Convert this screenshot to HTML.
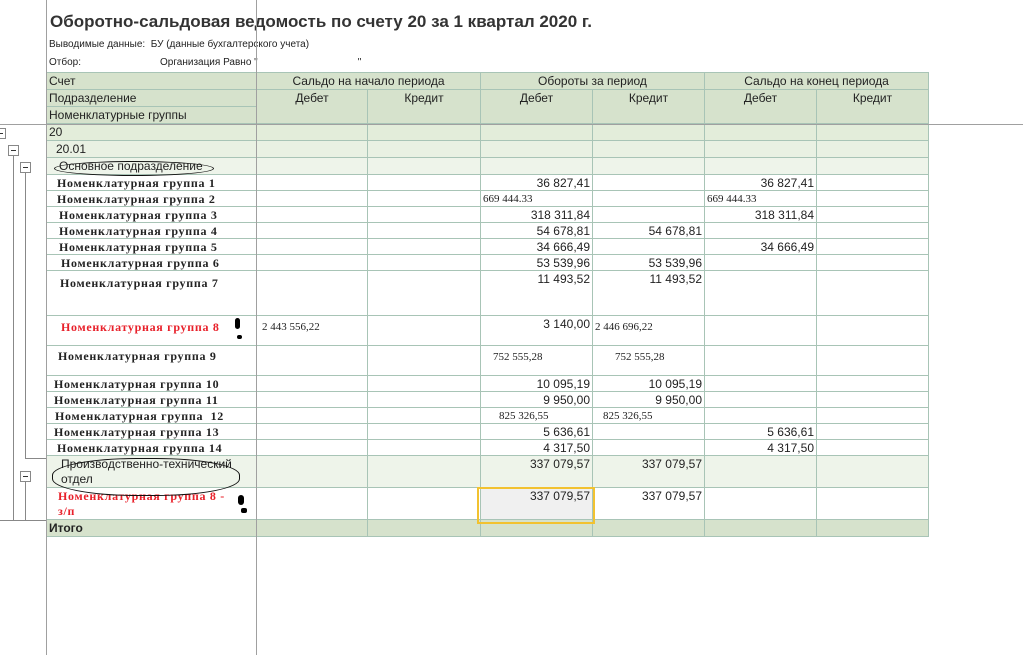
<!DOCTYPE html><html><head><meta charset="utf-8"><style>
body{margin:0;width:1023px;height:655px;background:#fff;position:relative;overflow:hidden;font-family:"Liberation Sans",sans-serif;font-size:12px;color:#222}
.a{position:absolute}
.vl{position:absolute;width:1px;background:#a0a0a0}
table{position:absolute;left:46px;top:72px;border-collapse:collapse;table-layout:fixed}
tr{height:16px}
tr.t{height:17px}
td{border:1px solid #a8c4b6;padding:1px 2px 0;height:auto;vertical-align:top;white-space:nowrap;overflow:hidden;line-height:14px}
.h{background:#d6e2cc;text-align:center;color:#222}
.n{text-align:right}
.s{font-family:"Liberation Serif",serif;font-size:11px}
.g{font-family:"Liberation Serif",serif;font-weight:bold;font-size:12px;letter-spacing:.7px;padding-left:10px}
.r{color:#e8202a}
.mb{position:absolute;width:9px;height:9px;border:1px solid #888;background:#fff}
.mb:after{content:"";position:absolute;left:2px;top:4px;width:5px;height:1px;background:#333}
</style></head><body>
<div class="a" style="left:50px;top:12px;font-size:17px;font-weight:bold;color:#333">Оборотно-сальдовая ведомость по счету 20 за 1 квартал 2020 г.</div>
<div class="a" style="left:49px;top:39px;font-size:10px">Выводимые данные:&nbsp; БУ (данные бухгалтерского учета)</div>
<div class="a" style="left:49px;top:57px;font-size:10px">Отбор:</div>
<div class="a" style="left:160px;top:57px;font-size:10px">Организация Равно "<span style="padding-left:100px">"</span></div>
<table>
<colgroup><col style="width:210px"><col style="width:111px"><col style="width:113px"><col style="width:112px"><col style="width:112px"><col style="width:112px"><col style="width:112px"></colgroup>
<tr class="t"><td class="h" style="text-align:left">Счет</td><td class="h" colspan="2">Сальдо на начало периода</td><td class="h" colspan="2">Обороты за период</td><td class="h" colspan="2">Сальдо на конец периода</td></tr>
<tr class="t"><td class="h" style="text-align:left">Подразделение</td><td class="h" rowspan="2">Дебет</td><td class="h" rowspan="2">Кредит</td><td class="h" rowspan="2">Дебет</td><td class="h" rowspan="2">Кредит</td><td class="h" rowspan="2">Дебет</td><td class="h" rowspan="2">Кредит</td></tr>
<tr class="t"><td class="h" style="text-align:left">Номенклатурные группы</td></tr>
<tr class="t" style="background:#e3edda"><td>20</td><td></td><td></td><td></td><td></td><td></td><td></td></tr>
<tr class="t" style="background:#e9f1e3"><td style="padding-left:9px">20.01</td><td></td><td></td><td></td><td></td><td></td><td></td></tr>
<tr class="t" style="background:#eef4ea"><td style="padding-left:12px">Основное подразделение</td><td></td><td></td><td></td><td></td><td></td><td></td></tr>
<tr><td class="g">Номенклатурная группа 1</td><td></td><td></td><td class="n">36 827,41</td><td></td><td class="n">36 827,41</td><td></td></tr>
<tr><td class="g">Номенклатурная группа 2</td><td></td><td></td><td class="s">669 444.33</td><td></td><td class="s">669 444.33</td><td></td></tr>
<tr><td class="g" style="padding-left:12px">Номенклатурная группа 3</td><td></td><td></td><td class="n">318 311,84</td><td></td><td class="n">318 311,84</td><td></td></tr>
<tr><td class="g" style="padding-left:12px">Номенклатурная группа 4</td><td></td><td></td><td class="n">54 678,81</td><td class="n">54 678,81</td><td></td><td></td></tr>
<tr><td class="g" style="padding-left:12px">Номенклатурная группа 5</td><td></td><td></td><td class="n">34 666,49</td><td></td><td class="n">34 666,49</td><td></td></tr>
<tr><td class="g" style="padding-left:14px">Номенклатурная группа 6</td><td></td><td></td><td class="n">53 539,96</td><td class="n">53 539,96</td><td></td><td></td></tr>
<tr style="height:45px"><td class="g" style="padding-top:5px;padding-left:13px">Номенклатурная группа 7</td><td></td><td></td><td class="n">11 493,52</td><td class="n">11 493,52</td><td></td><td></td></tr>
<tr style="height:30px"><td class="g r" style="padding-top:4px;padding-left:14px">Номенклатурная группа 8</td><td class="s" style="padding-top:4px;padding-left:5px">2 443 556,22</td><td></td><td class="n">3 140,00</td><td class="s" style="padding-top:4px">2 446 696,22</td><td></td><td></td></tr>
<tr style="height:30px"><td class="g" style="padding-top:3px;padding-left:11px">Номенклатурная группа 9</td><td></td><td></td><td class="s" style="padding-top:4px;padding-left:12px">752 555,28</td><td class="s" style="padding-top:4px;padding-left:22px">752 555,28</td><td></td><td></td></tr>
<tr><td class="g" style="padding-left:7px">Номенклатурная группа 10</td><td></td><td></td><td class="n">10 095,19</td><td class="n">10 095,19</td><td></td><td></td></tr>
<tr><td class="g" style="padding-left:7px">Номенклатурная группа 11</td><td></td><td></td><td class="n">9 950,00</td><td class="n">9 950,00</td><td></td><td></td></tr>
<tr><td class="g" style="padding-left:8px">Номенклатурная группа &nbsp;12</td><td></td><td></td><td class="s" style="padding-left:18px">825 326,55</td><td class="s" style="padding-left:10px">825 326,55</td><td></td><td></td></tr>
<tr><td class="g" style="padding-left:7px">Номенклатурная группа 13</td><td></td><td></td><td class="n">5 636,61</td><td></td><td class="n">5 636,61</td><td></td></tr>
<tr><td class="g" style="padding-left:10px">Номенклатурная группа 14</td><td></td><td></td><td class="n">4 317,50</td><td></td><td class="n">4 317,50</td><td></td></tr>
<tr style="height:31px;background:#eef4ea"><td style="padding-left:14px;line-height:15px">Производственно-технический<br>отдел</td><td></td><td></td><td class="n">337 079,57</td><td class="n">337 079,57</td><td></td><td></td></tr>
<tr style="height:31px"><td class="g r" style="line-height:15px;padding-left:11px">Номенклатурная группа 8 -<br>з/п</td><td></td><td></td><td class="n" style="background:#f0f0f0">337 079,57</td><td class="n">337 079,57</td><td></td><td></td></tr>
<tr class="t" style="background:#d6e2cc"><td style="font-weight:bold">Итого</td><td></td><td></td><td></td><td></td><td></td><td></td></tr>
</table>
<div class="a" style="left:477px;top:487px;width:114px;height:33px;border:2px solid #f2c230"></div>
<div class="vl" style="left:46px;top:0;height:655px"></div>
<div class="vl" style="left:256px;top:0;height:655px"></div>
<div class="a" style="left:0;top:124px;width:1023px;height:1px;background:#a0a0a0"></div>
<div class="mb" style="left:-5px;top:128px"></div>
<div class="mb" style="left:8px;top:145px"></div>
<div class="mb" style="left:20px;top:162px"></div>
<div class="mb" style="left:20px;top:471px"></div>
<div class="vl" style="left:13px;top:156px;height:364px;background:#888"></div>
<div class="vl" style="left:25px;top:173px;height:285px;background:#888"></div>
<div class="a" style="left:25px;top:458px;width:21px;height:1px;background:#888"></div>
<div class="vl" style="left:25px;top:482px;height:38px;background:#888"></div>
<div class="a" style="left:0;top:520px;width:46px;height:1px;background:#888"></div>
<div class="a" style="left:54px;top:161px;width:158px;height:13px;border:1px solid #111;border-radius:50%"></div>
<div class="a" style="left:52px;top:458px;width:186px;height:36px;border:1px solid #111;border-radius:45%"></div>
<div class="a" style="left:235px;top:318px;width:5px;height:11px;background:#000;border-radius:3px"></div>
<div class="a" style="left:237px;top:335px;width:5px;height:4px;background:#000;border-radius:2px"></div>
<div class="a" style="left:238px;top:495px;width:6px;height:10px;background:#000;border-radius:3px"></div>
<div class="a" style="left:241px;top:508px;width:6px;height:5px;background:#000;border-radius:2px"></div>
</body></html>
